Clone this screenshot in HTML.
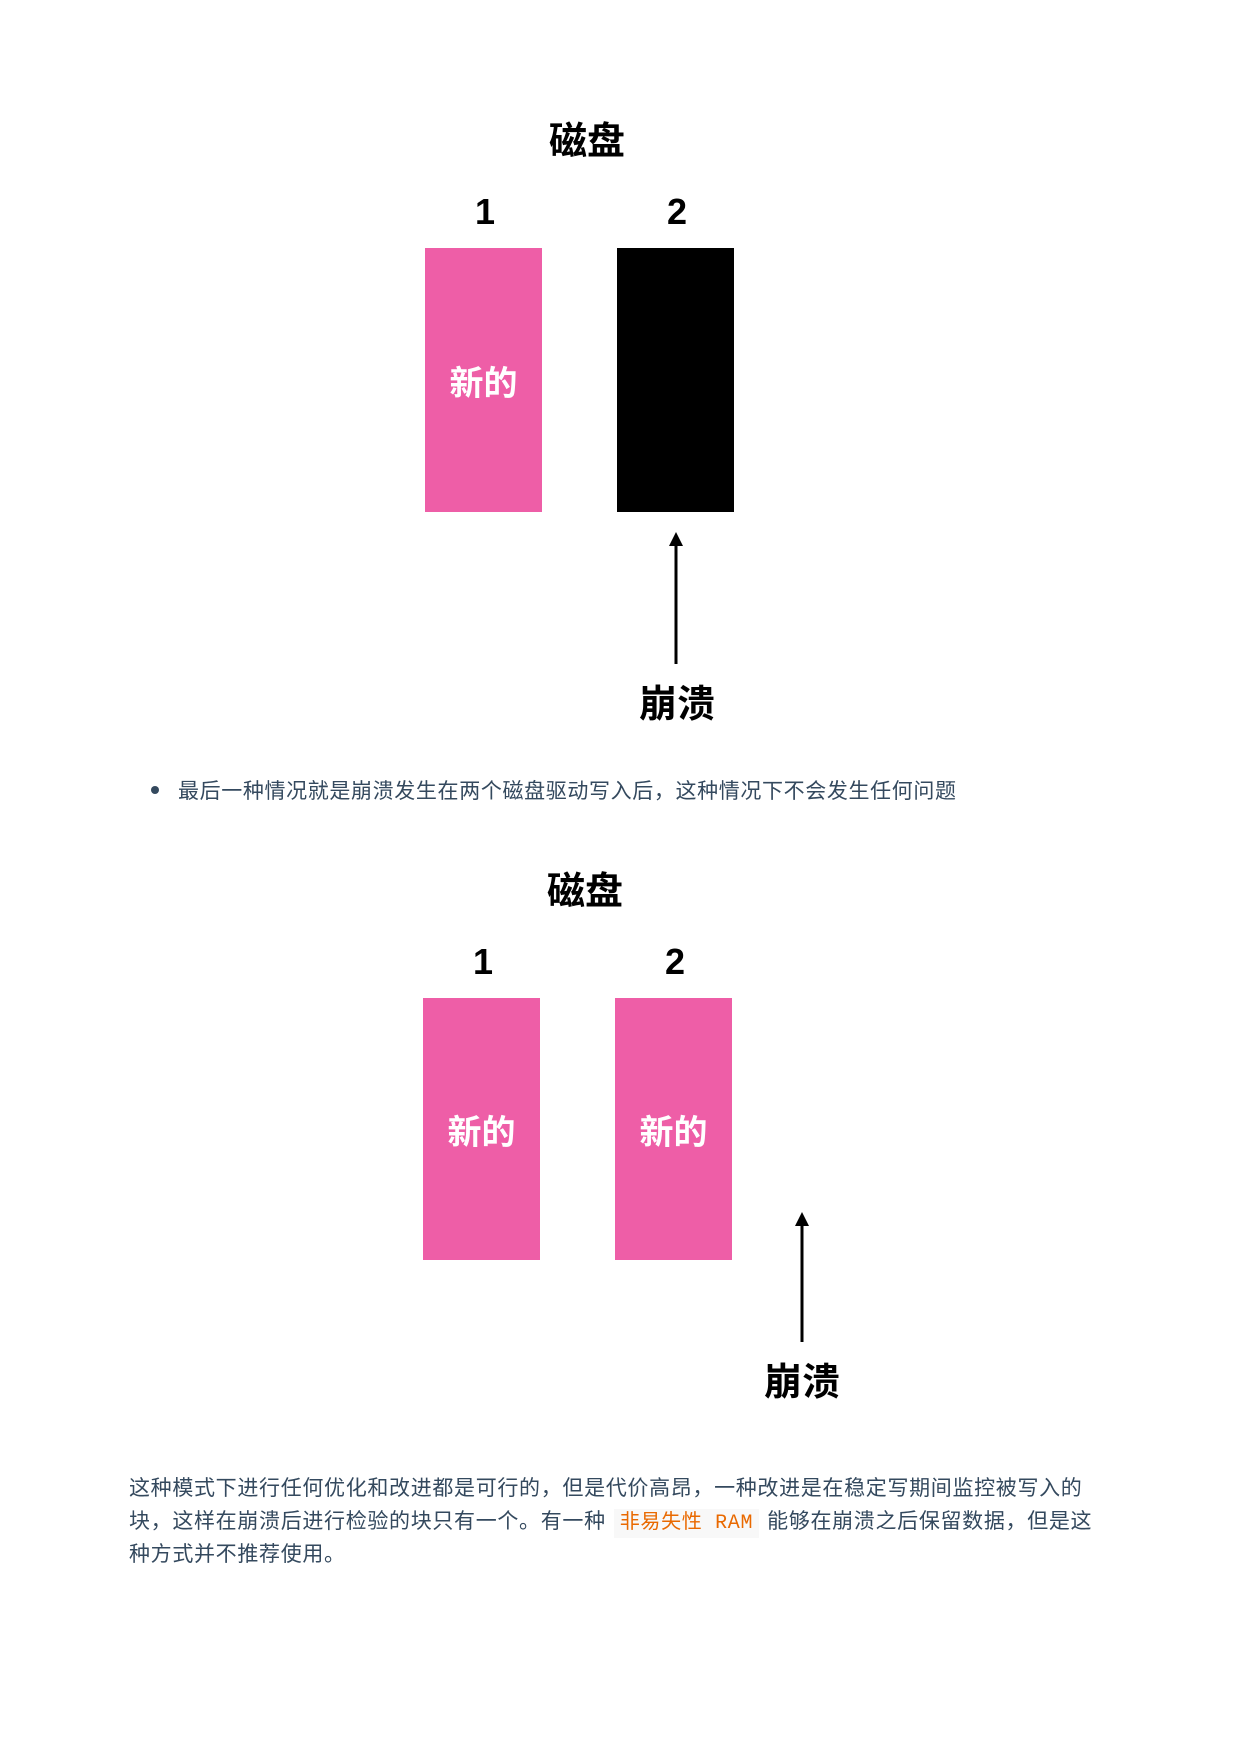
<!DOCTYPE html>
<html><head><meta charset="utf-8"><style>
body{margin:0;width:1240px;height:1754px;background:#fff;position:relative;font-family:"Liberation Sans","Noto Sans CJK SC",sans-serif;overflow:hidden}
.a{position:absolute;white-space:nowrap}
.t{font-weight:bold;font-size:38px;color:#000;transform:translateX(-50%)}
.n{font-weight:bold;font-size:36px;color:#000;transform:translateX(-50%)}
.r{position:absolute;background:#ee5ea7}
.k{position:absolute;background:#000}
.w{color:#fff;font-weight:bold;font-size:34px;display:flex;align-items:center;justify-content:center}
.tx{color:#34495e;font-size:21px}
code{font-family:"Liberation Mono","Noto Sans CJK SC",monospace;color:#e96900;background:#f8f8f8;padding:3px 6px;font-size:20px;margin:0 8px}
</style></head><body>
<div class="a t" style="left:587px;top:110px">磁盘</div>
<div class="a n" style="left:485px;top:191px">1</div>
<div class="a n" style="left:677px;top:191px">2</div>
<div class="r w" style="left:425px;top:248px;width:117px;height:264px">新的</div>
<div class="k" style="left:617px;top:248px;width:117px;height:264px"></div>
<svg class="a" style="left:660px;top:530px" width="40" height="140"><line x1="16" y1="12" x2="16" y2="134" stroke="#000" stroke-width="3"/><polygon points="9,16 16,2 23,16" fill="#000"/></svg>
<div class="a t" style="left:677px;top:673px">崩溃</div>
<div class="a" style="left:151px;top:786px;width:8px;height:8px;border-radius:50%;background:#34495e"></div>
<div class="a tx" style="left:178px;top:775px;letter-spacing:0.63px">最后一种情况就是崩溃发生在两个磁盘驱动写入后，这种情况下不会发生任何问题</div>
<div class="a t" style="left:585px;top:860px">磁盘</div>
<div class="a n" style="left:483px;top:941px">1</div>
<div class="a n" style="left:675px;top:941px">2</div>
<div class="r w" style="left:423px;top:998px;width:117px;height:262px">新的</div>
<div class="r w" style="left:615px;top:998px;width:117px;height:262px">新的</div>
<svg class="a" style="left:786px;top:1210px" width="40" height="140"><line x1="16" y1="12" x2="16" y2="132" stroke="#000" stroke-width="3"/><polygon points="9,16 16,2 23,16" fill="#000"/></svg>
<div class="a t" style="left:802px;top:1351px">崩溃</div>
<div class="a tx" style="left:129px;top:1472px;letter-spacing:0.67px">这种模式下进行任何优化和改进都是可行的，但是代价高昂，一种改进是在稳定写期间监控被写入的</div>
<div class="a tx" style="left:129px;top:1505px;letter-spacing:0.67px">块，这样在崩溃后进行检验的块只有一个。有一种<code>非易失性 RAM</code>能够在崩溃之后保留数据，但是这</div>
<div class="a tx" style="left:129px;top:1538px;letter-spacing:0.67px">种方式并不推荐使用。</div>
</body></html>
